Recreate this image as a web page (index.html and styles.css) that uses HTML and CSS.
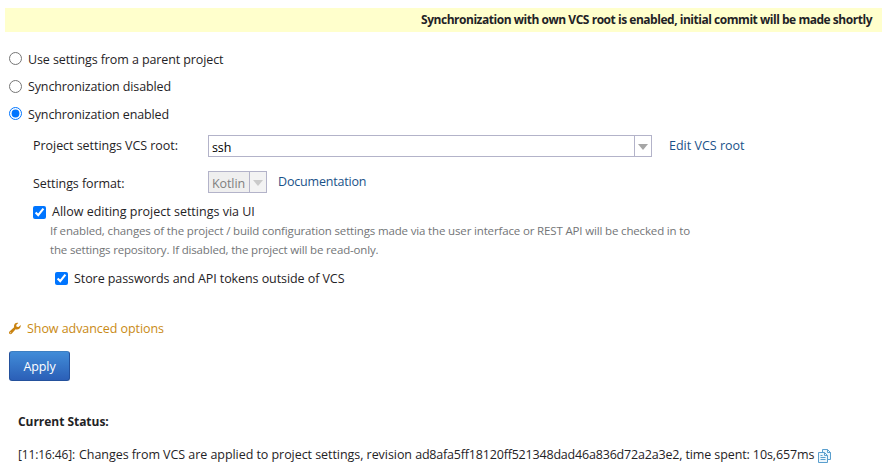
FILE: index.html
```
<!DOCTYPE html>
<html lang="en">
<head>
<meta charset="utf-8">
<title>Versioned Settings</title>
<link rel="stylesheet" href="styles.css">
</head>
<body>
<div class="banner"><span>Synchronization with own VCS root is enabled, initial commit will be made shortly</span></div>
<form class="settings">
  <label class="radio radio-parent"><input type="radio" name="sync"><span class="t-parent">Use settings from a parent project</span></label>
  <label class="radio radio-off"><input type="radio" name="sync"><span class="t-off">Synchronization disabled</span></label>
  <label class="radio radio-on"><input type="radio" name="sync" checked><span class="t-on">Synchronization enabled</span></label>

  <div class="row row-root">
    <span class="label">Project settings VCS root:</span>
    <div class="combo combo-root"><span class="value t-ssh">ssh</span><span class="arrow"><svg width="10" height="6" viewBox="0 0 10 6"><path d="M0 0H10L5 6Z"/></svg></span></div>
    <a class="link link-root">Edit VCS root</a>
  </div>
  <div class="row row-format">
    <span class="label">Settings format:</span>
    <div class="combo combo-format"><span class="value t-kotlin">Kotlin</span><span class="arrow"><svg width="10" height="6" viewBox="0 0 10 6"><path d="M0 0H10L5 6Z"/></svg></span></div>
    <a class="link link-doc">Documentation</a>
  </div>

  <label class="check check-edit"><input type="checkbox" checked><span>Allow editing project settings via UI</span></label>
  <div class="hint"><span class="hint-a">If enabled, changes of the project / build configuration settings made via the user interface or REST API will be checked in to</span><br><span class="hint-b">the settings repository. If disabled, the project will be read-only.</span></div>
  <label class="check check-store"><input type="checkbox" checked><span class="t-store">Store passwords and API tokens outside of VCS</span></label>

  <a class="advanced"><svg width="13" height="13" viewBox="0 0 13 13"><path d="M11.700 3.100L9.500 5.100 7.600 4.700 7.200 3 9.300.9C7.300.2 4.900 1.600 5 4.100L5.100 5.200.5 9.500C-.2 10.200-.1 11.200.5 11.800 1.100 12.400 2.100 12.300 2.700 11.700L6.600 7.300C9.200 8.100 12.100 6.300 11.700 3.100Z"/><circle cx="1.700" cy="10.700" r=".5" fill="#fff"/></svg><span>Show advanced options</span></a>
  <button type="button" class="apply">Apply</button>
</form>
<div class="status-title">Current Status:</div>
<div class="status"><span class="time">[11:16:46]:</span><span class="message"><span class="event">Changes from VCS are applied to project settings, revision </span><span class="revision">ad8afa5ff18120ff521348dad46a836d72a2a3e2</span>, time spent: 10s,657ms</span><svg class="copy" width="13" height="14" viewBox="0 0 13 14"><g fill="#edf6fc" stroke="#5a9fce"><path d="M4.500 3.500V.5H9.500L12.500 3.500V10.500H9.500"/><path d="M9.500.5V3.500H12.500" fill="none"/><path d="M.5 3.500H6.500L9.500 6.500V13.500H.5Z"/><path d="M6.500 3.500V6.500H9.500M2.500 6.500H4.500M2.500 8.500H7.500M2.500 10.500H7.500" fill="none"/></g></svg></div>
</body>
</html>
```
FILE: styles.css
```
* { box-sizing: border-box; }
body {
  margin: 0;
  padding-top: 8px;
  background: #fff;
  color: #1f2326;
  font: 12.5px/18px "Open Sans", "Noto Sans", sans-serif;
  white-space: nowrap;
}
input { flex: none; width: 13px; height: 13px; margin: 0; }
.banner {
  height: 24px;
  margin-left: 5px;
  padding: 3px 10px 0 0;
  background: #ffffcc;
  text-align: right;
  font-size: 12px;
  font-weight: 700;
  letter-spacing: -0.47px;
}
.settings { display: flex; flex-direction: column; align-items: flex-start; padding-left: 9px; }

.radio { display: flex; gap: 6px; height: 27px; }
.radio span, .check span, .advanced span { margin-top: 1px; }
.radio-parent { margin-top: 18px; }
.radio-parent input { margin-top: 2px; }
.radio-off input { margin-top: 3px; }
.radio-on { margin-top: 1px; }
.radio-on input { margin-top: 2px; }
.t-parent { letter-spacing: -0.1px; }
.t-off, .t-on { letter-spacing: -0.122px; }

.row { display: flex; align-items: flex-start; padding-left: 24px; }
.row-root { margin-top: 3px; height: 36px; }
.row-format { height: 31px; }
.label { width: 175px; letter-spacing: -0.04px; }
.row-root .label, .link-root { margin-top: 2px; }
.row-format .label { margin-top: 4px; letter-spacing: -0.08px; }
.combo { display: flex; height: 22px; border: 1px solid #b3b3c9; background: #fff; color: #000; }
.combo-root { width: 444px; }
.combo-format { width: 59px; background: #efefef; color: #808080; }
.value { flex: 1; padding: 3px 0 0 3px; }
.t-ssh { letter-spacing: -0.1px; }
.t-kotlin { letter-spacing: -0.102px; }
.arrow { display: flex; width: 17px; padding: 1px 0 0 0; align-items: center; justify-content: center; border-left: 1px solid #b3b3c9; fill: #a6a6a6; }
.combo-format .arrow { fill: #cacaca; background: #f3f3f3; }
.link { color: #1a5289; }
.link-root { margin-left: 17px; }
.link-doc { margin: 2px 0 0 11px; letter-spacing: -0.18px; }

.check { display: flex; align-items: flex-start; gap: 6px; height: 19px; }
.check input { margin-top: 4px; }
.check-edit { margin-left: 24px; }
.check-store { margin: 10px 0 0 46px; }
.check-store input { margin-top: 3px; }
.t-store { letter-spacing: -0.075px; }
.hint { margin-left: 41px; color: #737577; font-size: 11.5px; line-height: 19px; }
.hint-a { letter-spacing: -0.153px; }
.hint-b { letter-spacing: -0.17px; }

.advanced { display: flex; gap: 5px; margin-top: 31px; color: #c98a14; letter-spacing: -0.06px; }
.advanced svg { margin-top: 3px; fill: #c98310; }
.apply {
  width: 61px;
  height: 30px;
  margin-top: 13px;
  padding: 1px 0 0;
  border: 1px solid #24519c;
  border-top-color: #3d7fc2;
  border-radius: 3px;
  background: linear-gradient(#418cd8, #2b5fb7);
  color: #fff;
  font: 500 12.5px/18px "Open Sans", sans-serif;
  letter-spacing: -0.1px;
}
.status-title { margin: 32px 0 0 18px; font-size: 12px; font-weight: 700; letter-spacing: -0.04px; }
.status { display: flex; margin: 15px 0 0 18px; }
.time { width: 61px; font-size: 12px; letter-spacing: -0.135px; }
.message { letter-spacing: -0.112px; }
.event { letter-spacing: -0.055px; }
.revision { letter-spacing: -0.19px; }
.copy { margin: 3px 0 0 4px; }
```
